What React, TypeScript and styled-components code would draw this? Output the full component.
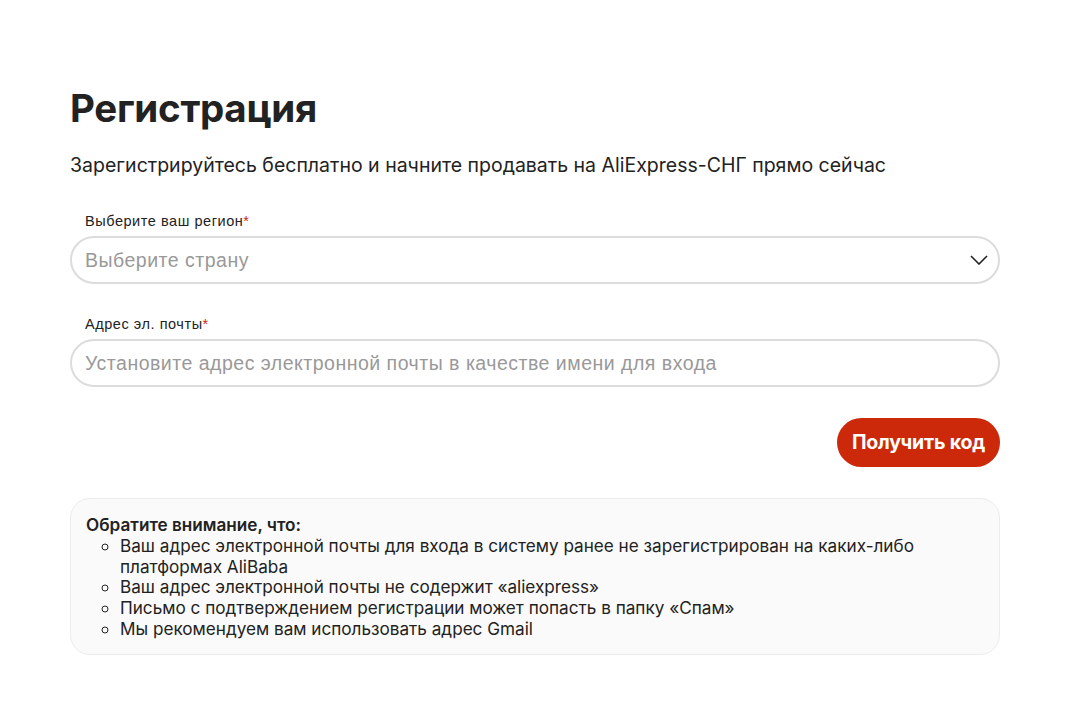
import React from "react";
import styled, { createGlobalStyle } from "styled-components";

const Global = createGlobalStyle`
  html, body { margin: 0; padding: 0; background: #fff; }
  body { font-family: Inter, "Noto Sans", sans-serif; color: #222; }
  * { box-sizing: border-box; }
`;

const Page = styled.div`
  padding: 84px 0 0 70px;
  width: 1000px;
`;

const Title = styled.h1`
  margin: 0;
  font-family: Inter, sans-serif;
  font-size: 38.5px;
  font-weight: 700;
  line-height: 48px;
  color: #222;
  letter-spacing: -0.3px;
`;

const Subtitle = styled.p`
  margin: 21px 0 0;
  font-size: 19.5px;
  line-height: 24px;
  color: #222;
`;

const Field = styled.div<{ $top: number }>`
  margin-top: ${(p) => p.$top}px;
  display: flex;
  flex-direction: column;
`;

const Label = styled.label`
  font-family: "Liberation Sans", Arial, sans-serif;
  font-size: 14.5px;
  letter-spacing: 0.55px;
  line-height: 16px;
  color: #222;
  margin: 0 0 7px 15px;
  span { color: #c8290d; }
`;

const Box = styled.div`
  height: 48px;
  border: 2px solid #dcdcdc;
  border-radius: 24px;
  display: flex;
  align-items: center;
  justify-content: space-between;
  padding: 0 10px 0 13px;
  font-family: "Liberation Sans", Arial, sans-serif;
  font-size: 19.5px;
  letter-spacing: 0.5px;
  color: #999;
`;

const ButtonRow = styled.div`
  display: flex;
  justify-content: flex-end;
  margin-top: 31px;
`;

const Button = styled.button`
  height: 49px;
  padding: 0 15px 2px;
  border: none;
  border-radius: 25px;
  background: #cc290a;
  color: #fff;
  font-family: Inter, sans-serif;
  font-weight: 700;
  font-size: 19.5px;
  letter-spacing: -0.2px;
  cursor: pointer;
`;

const Note = styled.div`
  margin-top: 31px;
  background: #fafafa;
  border: 1px solid #ececec;
  border-radius: 20px;
  padding: 14px 15px 14px 15px;
  font-size: 17.15px;
  line-height: 20.7px;
  color: #222;
`;

const NoteTitle = styled.div`
  font-weight: 600;
  line-height: 23px;
`;

const List = styled.ul`
  margin: 0;
  padding: 0 0 0 34px;
  list-style: circle;
`;

const Chevron = () => (
  <svg width="18" height="10" viewBox="0 0 18 10" fill="none">
    <path d="M1 1l8 8 8-8" stroke="#222" strokeWidth="1.6" />
  </svg>
);

export default function App() {
  return (
    <>
      <Global />
      <Page>
        <Title>Регистрация</Title>
        <Subtitle>Зарегистрируйтесь бесплатно и начните продавать на AliExpress-СНГ прямо сейчас</Subtitle>
        <Field $top={36}>
          <Label>Выберите ваш регион<span>*</span></Label>
          <Box>
            Выберите страну
            <Chevron />
          </Box>
        </Field>
        <Field $top={32}>
          <Label>Адрес эл. почты<span>*</span></Label>
          <Box>Установите адрес электронной почты в качестве имени для входа</Box>
        </Field>
        <ButtonRow>
          <Button>Получить код</Button>
        </ButtonRow>
        <Note>
          <NoteTitle>Обратите внимание, что:</NoteTitle>
          <List>
            <li>Ваш адрес электронной почты для входа в систему ранее не зарегистрирован на каких-либо платформах AliBaba</li>
            <li>Ваш адрес электронной почты не содержит «aliexpress»</li>
            <li>Письмо с подтверждением регистрации может попасть в папку «Спам»</li>
            <li>Мы рекомендуем вам использовать адрес Gmail</li>
          </List>
        </Note>
      </Page>
    </>
  );
}
